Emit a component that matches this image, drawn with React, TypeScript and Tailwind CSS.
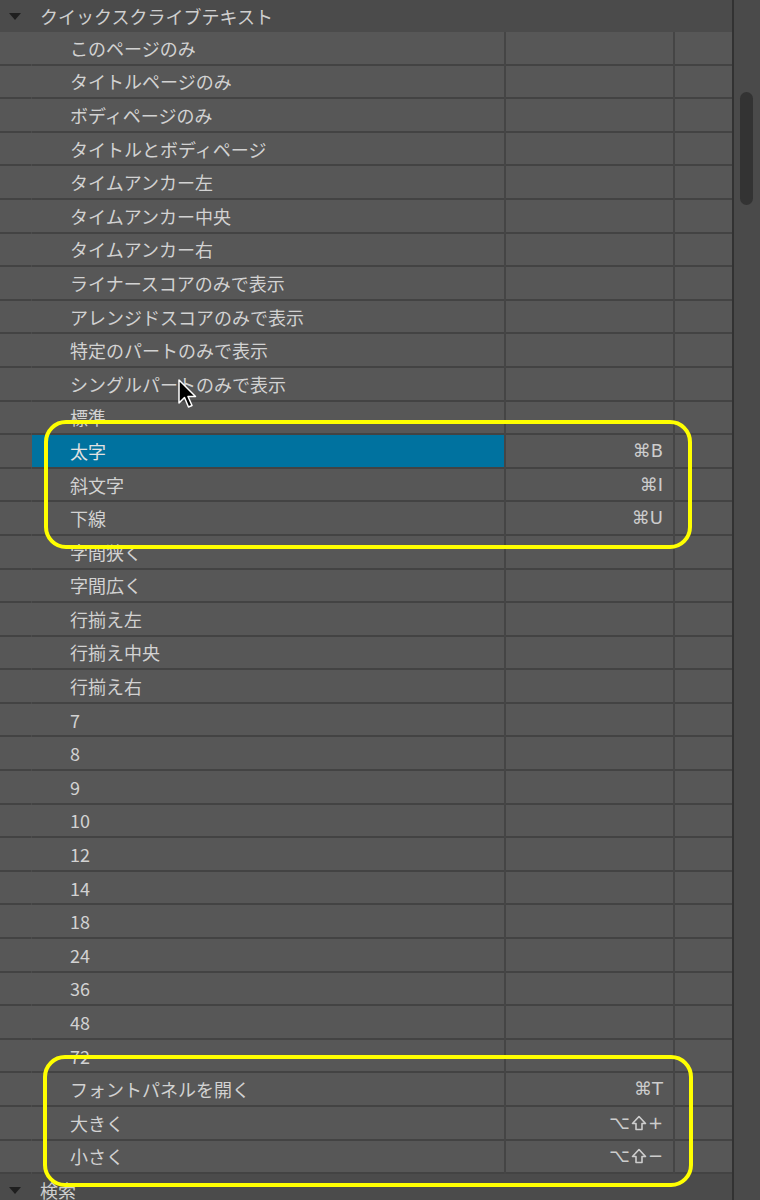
import React from "react";

const rows: { label: string; key?: string; selected?: boolean }[] = [
  { label: "このページのみ" },
  { label: "タイトルページのみ" },
  { label: "ボディページのみ" },
  { label: "タイトルとボディページ" },
  { label: "タイムアンカー左" },
  { label: "タイムアンカー中央" },
  { label: "タイムアンカー右" },
  { label: "ライナースコアのみで表示" },
  { label: "アレンジドスコアのみで表示" },
  { label: "特定のパートのみで表示" },
  { label: "シングルパートのみで表示" },
  { label: "標準" },
  { label: "太字", key: "⌘B", selected: true },
  { label: "斜文字", key: "⌘I" },
  { label: "下線", key: "⌘U" },
  { label: "字間狭く" },
  { label: "字間広く" },
  { label: "行揃え左" },
  { label: "行揃え中央" },
  { label: "行揃え右" },
  { label: "7" },
  { label: "8" },
  { label: "9" },
  { label: "10" },
  { label: "12" },
  { label: "14" },
  { label: "18" },
  { label: "24" },
  { label: "36" },
  { label: "48" },
  { label: "72" },
  { label: "フォントパネルを開く", key: "⌘T" },
  { label: "大きく", key: "⌥⇧+" },
  { label: "小さく", key: "⌥⇧−" },
];

const font = {
  fontFamily: '"Noto Sans CJK JP", "Liberation Sans", "DejaVu Sans", sans-serif',
};

const keyFont = { fontFamily: '"DejaVu Sans", "Liberation Sans", sans-serif' };

function Triangle() {
  return (
    <svg width="14" height="9" viewBox="0 0 14 9" className="shrink-0">
      <path d="M1 1 L13 1 L7 8 Z" fill="#1f1f1f" />
    </svg>
  );
}

function ShiftIcon() {
  return (
    <svg width="16" height="16" viewBox="0 0 16 16" className="mx-[1px] shrink-0">
      <path
        d="M8 1.5 L14.5 8.5 L11 8.5 L11 14.5 L5 14.5 L5 8.5 L1.5 8.5 Z"
        fill="none"
        stroke="#cdcdcd"
        strokeWidth="1.6"
        strokeLinejoin="round"
      />
    </svg>
  );
}

function Key({ text }: { text: string }) {
  const parts = text.split("⇧");
  if (parts.length === 1) {
    return (
      <span className="text-[18px] leading-none text-[#cdcdcd]" style={keyFont}>
        {text}
      </span>
    );
  }
  return (
    <span className="flex items-center text-[18px] leading-none text-[#cdcdcd]" style={keyFont}>
      <span>{parts[0]}</span>
      <ShiftIcon />
      <span>{parts[1]}</span>
    </span>
  );
}

function Header({ label }: { label: string }) {
  return (
    <div className="flex h-[32px] items-center bg-[#4b4b4b] pl-[8px] shrink-0">
      <Triangle />
      <span className="ml-[18px] text-[18px] leading-none text-[#cfcfcf]">{label}</span>
    </div>
  );
}

function Row({ label, keyText, selected }: { label: string; keyText?: string; selected?: boolean }) {
  return (
    <div className="flex h-[33.6px] shrink-0">
      <div className="w-[31px] border-b-2 border-[#434343]" />
      <div className="w-[1px] border-b-2 border-[#4c4c4c]" />
      <div
        className={
          "flex w-[472px] items-center border-b-2 border-[#434343] pl-[38px] " +
          (selected ? "bg-[#00729f] text-[#e2e2e2]" : "")
        }
      >
        <span className="text-[18px] leading-none">{label}</span>
      </div>
      <div className="w-[2px] bg-[#454545]" />
      <div className="flex w-[167px] items-center justify-end border-b-2 border-[#434343] pr-[10px]">
        {keyText && <Key text={keyText} />}
      </div>
      <div className="w-[2px] bg-[#454545]" />
      <div className="w-[57px] border-b-2 border-[#434343]" />
    </div>
  );
}

export default function App() {
  return (
    <div className="relative h-[1200px] w-[760px] overflow-hidden bg-[#575757] text-[#d2d2d2]" style={font}>
      <div className="flex h-full">
        <div className="flex w-[732px] flex-col">
          <Header label="クイックスクライブテキスト" />
          {rows.map((r, i) => (
            <Row key={i} label={r.label} keyText={r.key} selected={r.selected} />
          ))}
          <Header label="検索" />
        </div>
        <div className="w-[2px] bg-[#323232]" />
        <div className="relative flex-1 bg-[#4a4a4a]">
          <div className="absolute left-[6px] top-[92px] h-[113px] w-[13px] rounded-full bg-[#333333]" />
        </div>
      </div>

      {/* yellow annotations */}
      <div className="pointer-events-none absolute left-[44px] top-[420px] h-[129px] w-[648px] rounded-[22px] border-[4px] border-[#ffff00]" />
      <div className="pointer-events-none absolute left-[43px] top-[1055px] h-[132px] w-[650px] rounded-[22px] border-[4px] border-[#ffff00]" />

      {/* mouse cursor */}
      <svg className="absolute left-[176px] top-[377px]" width="22" height="34" viewBox="0 0 22 34">
        <path
          d="M3 3 L3 26 L8.5 20.5 L12.5 30 L16 28.5 L12 19.5 L19.5 19.5 Z"
          fill="#000"
          stroke="#fff"
          strokeWidth="1.5"
          strokeLinejoin="round"
        />
      </svg>
    </div>
  );
}
